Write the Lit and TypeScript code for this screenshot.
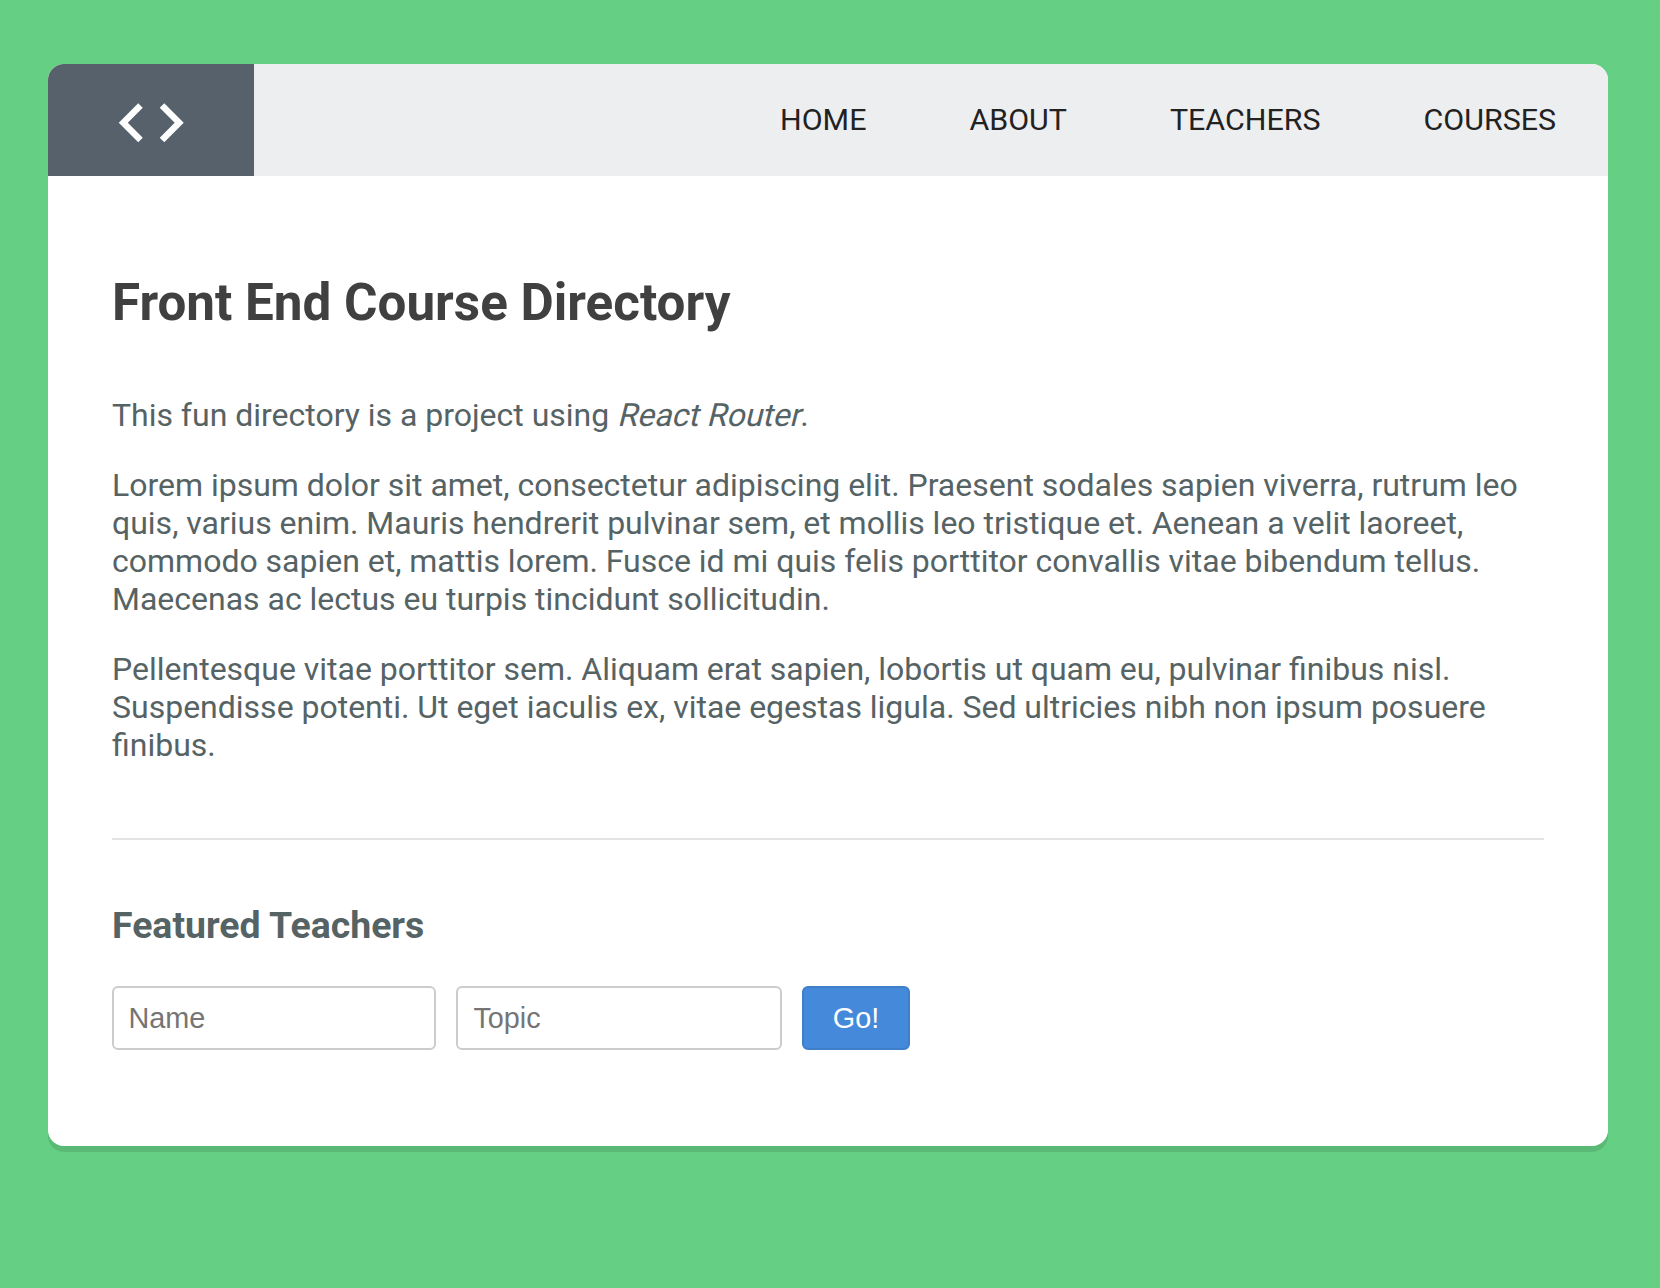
import { LitElement, html, css } from "lit";
import { customElement } from "lit/decorators.js";

@customElement("app-root")
export class AppRoot extends LitElement {
  static styles = css`
    :host { display: block; box-sizing: border-box; height: 1288px; padding: 64px 52px 0 48px; background: #65d083; font-family: Roboto, sans-serif; color: #566365; overflow: hidden; }
    * { box-sizing: border-box; }
    .card { height: 1082px; background: #fff; border-radius: 16px; overflow: hidden; }
    .shadow { border-radius: 16px; box-shadow: 0 6px 0 rgba(0, 0, 0, 0.1); }
    header { display: flex; justify-content: space-between; height: 112px; background: #edeef0; }
    .logo { width: 206px; background: #57616b; display: flex; }
    .logo svg { width: 206px; height: 112px; }
    nav { display: flex; gap: 103px; padding: 0 52px; line-height: 112px; font-size: 30.4px; color: #222; }
    main { padding: 96px 64px 0; font-size: 32px; line-height: 38px; }
    h2 { margin: 0; font-size: 51.2px; line-height: 62px; color: #404040; font-weight: 700; }
    p { margin: 0 0 32px; word-spacing: -0.08px; }
    em { display: inline-block; font-style: normal; transform: skewX(-14deg); transform-origin: 0 30px; }
    .intro { padding-top: 62px; }
    .featured { margin-top: 74px; border-top: 2px solid #e3e3e3; padding-top: 62px; }
    h3 { margin: 0; font-size: 37.44px; line-height: 46px; }
    form { display: flex; gap: 20px; margin-top: 38px; }
    input, button { font: 28.8px "Liberation Sans", Arial, sans-serif; height: 64px; border-radius: 6px; margin: 0; }
    input { width: 324px; padding: 0 14.4px; border: 2px solid #ccc; background: #fff; }
    input + input { width: 326px; padding-left: 15.4px; }
    input::placeholder { color: #757575; }
    button { width: 108px; padding: 0; color: #fff; background: #4489da; border: 2px solid #3f7ec9; }
  `;
  render() {
    return html`<div class="shadow"><div class="card">
      <header>
        <div class="logo"><svg viewBox="0 0 206 112" fill="none" stroke="#fff" stroke-width="6.4"><path d="M92.5 41.5L75.3 58.7L92.5 76M114 41.5L131.2 58.7L114 76" /></svg></div>
        <nav><span>HOME</span><span>ABOUT</span><span>TEACHERS</span><span>COURSES</span></nav>
      </header>
      <main>
        <h2>Front End Course Directory</h2>
        <div class="intro">
          <p>This fun directory is a project using <em>React Router</em>.</p>
          <p>Lorem ipsum dolor sit amet, consectetur adipiscing elit. Praesent sodales sapien viverra, rutrum leo<br />quis, varius enim. Mauris hendrerit pulvinar sem, et mollis leo tristique et. Aenean a velit laoreet,<br />commodo sapien et, mattis lorem. Fusce id mi quis felis porttitor convallis vitae bibendum tellus.<br />Maecenas ac lectus eu turpis tincidunt sollicitudin.</p>
          <p>Pellentesque vitae porttitor sem. Aliquam erat sapien, lobortis ut quam eu, pulvinar finibus nisl.<br />Suspendisse potenti. Ut eget iaculis ex, vitae egestas ligula. Sed ultricies nibh non ipsum posuere<br />finibus.</p>
        </div>
        <section class="featured">
          <h3>Featured Teachers</h3>
          <form><input placeholder="Name" /><input placeholder="Topic" /><button type="button">Go!</button></form>
        </section>
      </main>
    </div></div>`;
  }
}
